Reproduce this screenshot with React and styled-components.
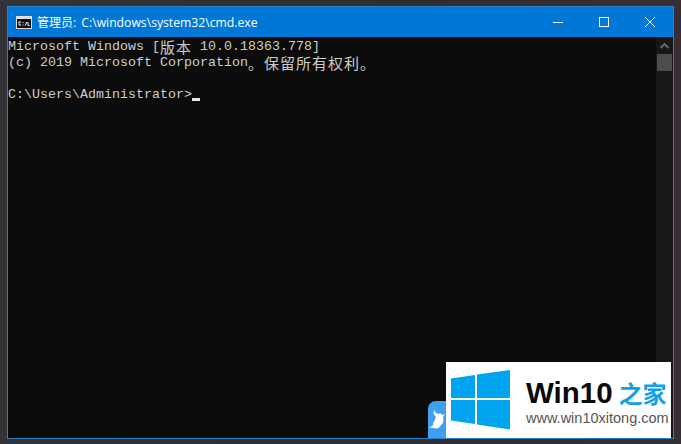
import React from 'react'
import styled, {createGlobalStyle} from 'styled-components'

const COLOR_BLUE = '#0078d7'
const COLOR_CONSOLE = '#0c0c0c'
const COLOR_TEXT = '#cccccc'

const GlobalStyle = createGlobalStyle`
  html, body {
    margin: 0;
    padding: 0;
    background: #2f2c33;
  }
`

const Desktop = styled.div`
  position: relative;
  width: 681px;
  height: 444px;
  overflow: hidden;
  box-sizing: border-box;
  padding: 6px 7px 5px 7px;
  background: linear-gradient(90deg, #333236 0%, #302d33 60%, #372f35 100%);
`

const Window = styled.div`
  display: flex;
  flex-direction: column;
  height: 100%;
  box-sizing: border-box;
  border: 1px solid #2a7fc9;
  background: ${COLOR_CONSOLE};
`

const TitleBar = styled.div`
  display: flex;
  align-items: center;
  height: 30px;
  flex: none;
  padding-left: 8px;
  background: ${COLOR_BLUE};
`

const TitleText = styled.span`
  flex: 1;
  margin-left: 5px;
  color: #fff;
  font: 12px "Open Sans", "Noto Sans CJK SC", sans-serif;
  white-space: pre;
`

const TitlePath = styled.span`
  margin-left: 2px;
  font-size: 12.2px;
`

const Controls = styled.div`
  display: flex;
  height: 100%;
`

const ControlButton = styled.div`
  display: flex;
  align-items: center;
  justify-content: center;
  width: 46px;
  height: 100%;
`

const Body = styled.div`
  flex: 1;
  display: flex;
  min-height: 0;
`

const Console = styled.div`
  flex: 1;
  padding-top: 2px;
  color: ${COLOR_TEXT};
  font: 13.33px/16px "Liberation Mono", "Noto Sans CJK SC", monospace;
`

const Line = styled.div`
  display: flex;
  height: 16px;
  white-space: pre;
`

const Cjk = styled.span`
  display: inline-block;
  width: ${p => p.$cells * 8}px;
  font: 15px/16px "Noto Sans CJK SC", sans-serif;
  letter-spacing: 1px;
`

const Cursor = styled.span`
  align-self: flex-end;
  width: 8px;
  height: 3px;
  margin-bottom: 2px;
  background: #e8e8e8;
`

const ScrollTrack = styled.div`
  display: flex;
  flex-direction: column;
  align-items: center;
  width: 17px;
  flex: none;
  background: #171717;
`

const ScrollArrow = styled.div`
  display: flex;
  align-items: center;
  justify-content: center;
  width: 100%;
  height: 17px;
`

const ScrollThumb = styled.div`
  width: 15px;
  height: 17px;
  background: #4d4d4d;
`

const Bubble = styled.div`
  position: absolute;
  left: 428px;
  top: 401px;
  width: 30px;
  height: 37px;
  border-radius: 8px 0 0 0;
  background: #3f9ff0;
`

const Watermark = styled.div`
  position: absolute;
  left: 446px;
  top: 362px;
  display: flex;
  align-items: center;
  gap: 14px;
  box-sizing: border-box;
  width: 225px;
  height: 76px;
  padding-left: 5px;
  background: #fff;
`

const BrandColumn = styled.div`
  display: flex;
  flex-direction: column;
  gap: 1px;
  padding-top: 2px;
`

const BrandRow = styled.div`
  display: flex;
  align-items: center;
  gap: 6px;
`

const BrandName = styled.span`
  color: #0a0a0a;
  font: bold 29.5px/32px "Liberation Sans", sans-serif;
`

const BrandCjk = styled.span`
  color: #12a0e8;
  font: bold 24px/32px "Noto Sans CJK SC", sans-serif;
`

const BrandUrl = styled.span`
  color: #555;
  font: 14.5px/16px "Liberation Sans", sans-serif;
`

const CmdIcon = () => (
  <svg width="16" height="13" viewBox="0 0 16 13">
    <rect x="0.5" y="0.5" width="15" height="12" fill="#111" stroke="#ddd" />
    <rect x="1" y="1" width="14" height="2" fill="#ddd" />
    <path d="M3 6h2M3 6v3M3 9h2M7 6v1M7 8.500v1M9 9.500l2-3.500M12 6v3.500h1.500" stroke="#fff" fill="none" />
  </svg>
)

const WinLogo = () => (
  <svg width="61" height="60" viewBox="0 0 61 60">
    <path fill="#00a4ee" d="M0 8.500 L24 5 V28 H0 Z M26 4.500 L59 0 V28 H26 Z M0 30 H24 V54 L0 50.500 Z M26 30 H59 V59.500 L26 54.500 Z" />
  </svg>
)

const App = () => (
  <Desktop>
    <GlobalStyle />
    <Window>
      <TitleBar>
        <CmdIcon />
        <TitleText>管理员: <TitlePath>C:\windows\system32\cmd.exe</TitlePath></TitleText>
        <Controls>
          <ControlButton>
            <svg width="10" height="10" viewBox="0 0 10 10">
              <path d="M0 5.500h10" stroke="#fff" />
            </svg>
          </ControlButton>
          <ControlButton>
            <svg width="10" height="10" viewBox="0 0 10 10">
              <rect x="0.500" y="0.500" width="9" height="9" fill="none" stroke="#fff" />
            </svg>
          </ControlButton>
          <ControlButton>
            <svg width="10" height="10" viewBox="0 0 10 10">
              <path d="M0 0l10 10M10 0L0 10" stroke="#fff" />
            </svg>
          </ControlButton>
        </Controls>
      </TitleBar>
      <Body>
        <Console>
          <Line>Microsoft Windows [<Cjk $cells={4}>版本</Cjk> 10.0.18363.778]</Line>
          <Line>(c) 2019 Microsoft Corporation<Cjk $cells={18}>。保留所有权利。</Cjk></Line>
          <Line />
          <Line>C:\Users\Administrator&gt;<Cursor /></Line>
        </Console>
        <ScrollTrack>
          <ScrollArrow>
            <svg width="9" height="6" viewBox="0 0 9 6">
              <path d="M0.500 5L4.500 1L8.500 5" stroke="#666" strokeWidth="2" fill="none" />
            </svg>
          </ScrollArrow>
          <ScrollThumb />
        </ScrollTrack>
      </Body>
    </Window>
    <Bubble>
      <svg width="18" height="37" viewBox="0 0 18 37">
        <path fill="#fff" d="M5 27c4 1 7 0 8-3 2-1 3-4 2-8l2-3-3 1c-1-2-3-2-4-1-2-1-3-2-4-4-1 3 0 5 2 7-1 3-2 5-3 6 1 2-1 4-5 4 1 0 3 1 5 1z" />
      </svg>
    </Bubble>
    <Watermark>
      <WinLogo />
      <BrandColumn>
        <BrandRow>
          <BrandName>Win10</BrandName>
          <BrandCjk>之家</BrandCjk>
        </BrandRow>
        <BrandUrl>www.win10xitong.com</BrandUrl>
      </BrandColumn>
    </Watermark>
  </Desktop>
)

export default App
